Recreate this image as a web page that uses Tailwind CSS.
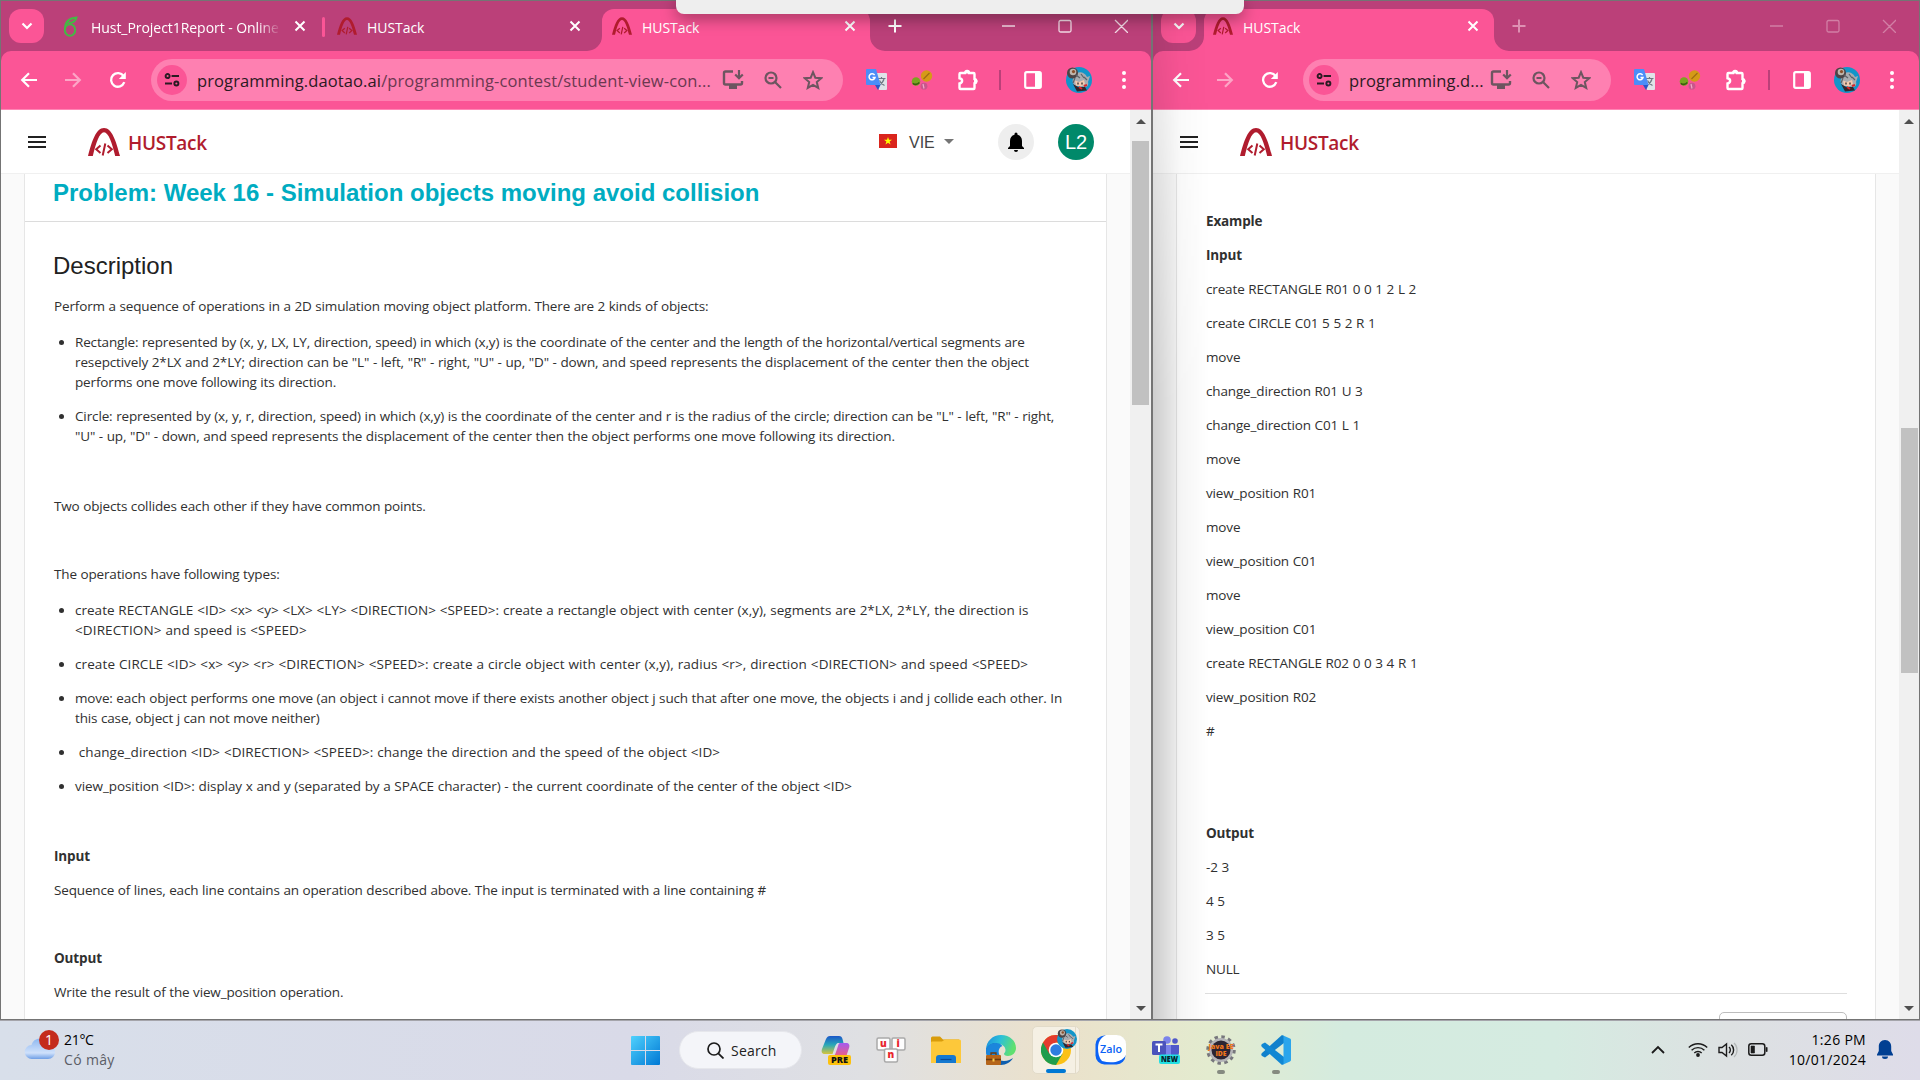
<!DOCTYPE html>
<html lang="en">
<head>
<meta charset="utf-8">
<title>HUSTack</title>
<script src="https://cdn.jsdelivr.net/npm/@tailwindcss/browser@4"></script>
</head>
<body class="w-[1920px] h-[1080px] overflow-hidden relative bg-[#d9deea] font-['Open_Sans','Noto_Sans',sans-serif] text-[#212121]">

<svg class="hidden">
  <symbol id="logo" viewBox="0 0 32 28"><g fill="none" stroke="#b01c2e"><path d="M12.500 17.500l-4.300 3.800 4.300 3.800M19.500 17.500l4.300 3.800-4.300 3.800M17.300 15.500L14.700 27.500" stroke-width="2"/></g><path d="M0 28C4 13 8 0 16 0s12 13 16 28h-4.800C24 15 20.500 4.200 16 4.200S8 15 4.800 28z" fill="#b01c2e"/></symbol>
  <symbol id="x" viewBox="0 0 12 12"><path d="M1.500 1.500l9 9M10.500 1.500l-9 9" stroke="currentColor" stroke-width="2" fill="none"/></symbol>
  <symbol id="chev" viewBox="0 0 12 8"><path d="M1.500 1.500L6 6l4.500-4.500" stroke="currentColor" stroke-width="2.200" fill="none"/></symbol>
  <symbol id="plus" viewBox="0 0 14 14"><path d="M7 0.500v13M0.500 7h13" stroke="currentColor" stroke-width="2" fill="none"/></symbol>
  <symbol id="back" viewBox="0 0 18 16"><path d="M17 8H2.500M9 1.200L2.200 8 9 14.800" stroke="currentColor" stroke-width="2.200" fill="none"/></symbol>
  <symbol id="reload" viewBox="0 0 18 18"><path d="M15.300 11.200A6.800 6.800 0 1 1 14.600 5.200" stroke="currentColor" stroke-width="2.300" fill="none"/><path d="M16.800 1v7h-7z" fill="currentColor"/></symbol>
  <symbol id="tune" viewBox="0 0 18 16"><g stroke="#2b1a22" stroke-width="2.200" fill="none"><circle cx="4" cy="3.500" r="2.300"/><path d="M8.500 3.500H17M1 12h8"/><circle cx="14" cy="12" r="2.300"/></g></symbol>
  <symbol id="install" viewBox="0 0 22 20"><path d="M11 1.500H3.500A1.500 1.500 0 0 0 2 3v10a1.500 1.500 0 0 0 1.500 1.500h15A1.500 1.500 0 0 0 20 13v-2" stroke="#6d5560" stroke-width="2.400" fill="none"/><path d="M7 15h8v4H7z" fill="#6d5560"/><path d="M17 0v7M13.200 4.500L17 8.300l3.800-3.800" stroke="#6d5560" stroke-width="2.200" fill="none"/></symbol>
  <symbol id="zoomout" viewBox="0 0 18 18"><g stroke="#6d5560" stroke-width="2.200" fill="none"><circle cx="7" cy="7" r="5.500"/><path d="M11 11l6 6M4.500 7h5"/></g></symbol>
  <symbol id="star" viewBox="0 0 20 20"><path d="M10 2.200l2.300 5.500 6 .5-4.500 3.900 1.400 5.800L10 14.800l-5.200 3.100 1.400-5.800L1.700 8.200l6-.5z" stroke="#6d5560" stroke-width="2" fill="none"/></symbol>
  <symbol id="gtrans" viewBox="0 0 22 22"><path d="M9 4h11a1 1 0 0 1 1 1v15a1 1 0 0 1-1 1h-7z" fill="#dfe3e8"/><path d="M12 9.500h7.500M15.500 8v1.500M18 10c-.8 3-3 5-5 6M13.500 11.500c1 2.500 3 4 5 5" stroke="#6f7a84" stroke-width="1.200" fill="none"/><path d="M1 0h9l4.500 16H1a1 1 0 0 1-1-1V1a1 1 0 0 1 1-1z" fill="#4b8df8"/><path d="M9 16h5.500L12 21z" fill="#2a56c6"/><path d="M8.600 6.200A3 3 0 1 0 9 8.500H6.500" stroke="#fff" stroke-width="1.500" fill="none"/></symbol>
  <symbol id="balls" viewBox="0 0 22 20"><circle cx="15.500" cy="6" r="5.700" fill="#d59a17"/><path d="M12.500 9L18.500 3" stroke="#a06c12" stroke-width="1.300"/><circle cx="5" cy="11.500" r="4.300" fill="#7aa51f"/><path d="M1.800 13.300c2.500 1.700 5 .9 6.500-.8" stroke="#3a5c10" stroke-width="1.500" fill="none"/><circle cx="13" cy="16.200" r="3.400" fill="#c9568c"/><path d="M12 14l1 4.500" stroke="#f0a8c8" stroke-width="1.200"/></symbol>
  <symbol id="puzzle" viewBox="0 0 22 22"><path d="M3.500 4H8a2 2 0 0 1 4 0h4.500A1 1 0 0 1 17.500 5v5a2.200 2.200 0 0 1 0 4.300v4.700a1 1 0 0 1-1 1h-13a1 1 0 0 1-1-1v-4.500c3.500-.5 3.500-4.800 0-5.300V5a1 1 0 0 1 1-1z" stroke="#fff" stroke-width="2.400" fill="none"/><path d="M8 4a2.200 2.600 0 0 1 4.400 0zM17.500 9.800a2.600 2.300 0 0 1 0 4.600z" fill="#fff" stroke="#fff"/></symbol>
  <symbol id="panel" viewBox="0 0 18 18"><rect x="1.200" y="1.200" width="15.600" height="15.600" rx="1.500" stroke="#fff" stroke-width="2.200" fill="none"/><path d="M11 1h6v16h-6z" fill="#fff"/></symbol>
  <symbol id="avatar" viewBox="0 0 26 26"><circle cx="13" cy="13" r="13" fill="#1295c9"/><path d="M8 9c3-5 10-5 13 1l3-1-2 6c1 3-1 5-3 5l-9-1c-4-2-4-6-2-10z" fill="#a9acb0"/><path d="M9 13.500l4 1.500 5-2 1 4-4 2.500-5-1z" fill="#f3c9ae"/><path d="M7 17l5 3 7 0 2 3.500-10 1z" fill="#33262b"/><circle cx="6.500" cy="6" r="5.500" fill="#4c4446"/><circle cx="7" cy="5" r="3.300" fill="#bdb5ad"/><circle cx="7.500" cy="4.600" r="1.600" fill="#8a4f2a"/><path d="M13 20l3 2M18 19l3-1" stroke="#d8262c" stroke-width="2"/><path d="M10 8l4 3M15 7l3 4M18 10l3 3M9 11l-2 5" stroke="#5d6268" stroke-width="1.200"/><path d="M12 15.500v2M16 15.500v2" stroke="#222" stroke-width="1.200"/></symbol>
  <symbol id="dots" viewBox="0 0 4 20"><g fill="#fff"><circle cx="2" cy="3" r="2"/><circle cx="2" cy="10" r="2"/><circle cx="2" cy="17" r="2"/></g></symbol>
  <symbol id="menu" viewBox="0 0 18 12"><path d="M0 1h18M0 6h18M0 11h18" stroke="#212121" stroke-width="2"/></symbol>
  <symbol id="flareR" viewBox="0 0 15 15"><path d="M0 0v15h15A15 15 0 0 1 0 0z" fill="#fb5596"/></symbol>
  <symbol id="flareL" viewBox="0 0 15 15"><path d="M15 0v15H0A15 15 0 0 0 15 0z" fill="#fb5596"/></symbol>
  <symbol id="up" viewBox="0 0 10 5"><path d="M0 5L5 0l5 5z" fill="#505050"/></symbol>
  <symbol id="down" viewBox="0 0 10 5"><path d="M0 0l5 5 5-5z" fill="#505050"/></symbol>
</svg>

<div class="flex h-[1020px] border-b border-[#747474] bg-white">

  <!-- Left browser window -->
  <section class="w-[1153px] shrink-0 h-full flex flex-col border-t border-l border-r-2 border-[#747474]">
    <div class="h-[50px] bg-[#bb4079] flex text-white text-[14px] shrink-0">
      <div class="ml-2 mt-2 w-[35px] h-[34px] rounded-[12px] bg-[#fb5596] flex items-center justify-center"><svg class="w-3 h-2"><use href="#chev"/></svg></div>
      <div class="ml-[19px] w-[261px] h-[50px] flex items-center">
        <svg class="w-[15px] h-[21px]" viewBox="0 0 15 21"><g fill="none" stroke="#44b944" stroke-width="2"><ellipse cx="7" cy="14" rx="5.200" ry="5.800"/><path d="M2 13C2 6 6 2 13.500 1.500c-1 4-4 5.500-8 5.500"/></g></svg>
        <span class="ml-[13px] mt-[3px] w-[190px] overflow-hidden whitespace-nowrap tracking-[-0.050px] mask-r-from-88%">Hust_Project1Report - Online</span>
        <svg class="ml-[13px] w-3 h-3"><use href="#x"/></svg>
      </div>
      <div class="-ml-0.5 mt-4 w-[3px] h-5 bg-[#fb5596] rounded"></div>
      <div class="ml-3 w-[265px] h-[50px] flex items-center">
        <svg class="w-5 h-[18px]"><use href="#logo"/></svg>
        <span class="ml-[10px] mt-[3px] tracking-[-0.050px]">HUSTack</span>
        <svg class="ml-auto mr-[21px] w-3 h-3"><use href="#x"/></svg>
      </div>
      <svg class="-ml-[15px] mt-[35px] w-[15px] h-[15px]"><use href="#flareL"/></svg>
      <div class="mt-2 w-[268px] h-[42px] rounded-t-[12px] bg-[#fb5596] flex items-center pb-2">
        <svg class="ml-[10px] w-5 h-[18px]"><use href="#logo"/></svg>
        <span class="ml-[10px] mt-[3px] tracking-[-0.050px]">HUSTack</span>
        <svg class="ml-auto mr-[14px] w-3 h-3"><use href="#x"/></svg>
      </div>
      <svg class="mt-[35px] w-[15px] h-[15px]"><use href="#flareR"/></svg>
      <svg class="ml-[3px] mt-[18px] w-[14px] h-[14px]"><use href="#plus"/></svg>
      <svg class="ml-auto mr-[23px] mt-[18px] w-[126px] h-[14px] text-[#f3dbe6]" viewBox="0 0 126 14"><path d="M0 7h13M58.500 1.500h9a1.500 1.500 0 0 1 1.500 1.500v8.500a1.500 1.500 0 0 1-1.500 1.500h-9a1.500 1.500 0 0 1-1.500-1.500V3a1.500 1.500 0 0 1 1.500-1.500zM113 1l13 13M126 1l-13 13" stroke="currentColor" stroke-width="1.300" fill="none"/></svg>
    </div>
    <div class="bg-[#bb4079] shrink-0">
      <div class="h-[59px] border-b border-[#ff86b5] rounded-t-[10px] bg-[#fb5596] flex items-center text-white">
        <svg class="ml-[19px] w-[18px] h-4"><use href="#back"/></svg>
        <svg class="ml-[26px] w-[18px] h-4 -scale-x-100 text-[#fda5c6]"><use href="#back"/></svg>
        <svg class="ml-[27px] w-[18px] h-[18px]"><use href="#reload"/></svg>
        <div class="ml-6 w-[692px] h-[42px] rounded-full bg-[#fe80b1] flex items-center pl-1.5 pr-5">
          <div class="size-[30px] rounded-full bg-[#fb5596] flex items-center justify-center"><svg class="w-4 h-[14px]"><use href="#tune"/></svg></div>
          <span class="ml-[10px] mt-0.5 whitespace-nowrap text-[16.500px] tracking-[0.120px] text-[#6b3850]"><span class="text-[#2b1a22]">programming.daotao.ai</span>/programming-contest/student-view-con...</span>
          <svg class="ml-auto w-[22px] h-5"><use href="#install"/></svg>
          <svg class="ml-5 w-[18px] h-[18px]"><use href="#zoomout"/></svg>
          <svg class="ml-[21px] w-5 h-5"><use href="#star"/></svg>
        </div>
        <svg class="ml-[23px] w-[22px] h-[22px]"><use href="#gtrans"/></svg>
        <svg class="ml-[23px] w-[22px] h-5"><use href="#balls"/></svg>
        <svg class="ml-6 w-[22px] h-[22px]"><use href="#puzzle"/></svg>
        <div class="ml-[20px] w-0.5 h-5 bg-[#bb4079]"></div>
        <svg class="ml-[23px] w-[18px] h-[18px]"><use href="#panel"/></svg>
        <svg class="ml-6 w-[26px] h-[26px]"><use href="#avatar"/></svg>
        <svg class="ml-[30px] w-1 h-5"><use href="#dots"/></svg>
      </div>
    </div>
    <div class="flex flex-1 min-h-0">
      <div class="flex-1 flex flex-col bg-[#fafafa]">
        <header class="h-[64px] shrink-0 bg-white border-b border-[#f0f0f0] flex items-center">
          <svg class="ml-[27px] w-[18px] h-3"><use href="#menu"/></svg>
          <svg class="ml-[42px] w-8 h-7"><use href="#logo"/></svg>
          <span class="ml-2 mt-[3px] text-[19px] font-semibold text-[#b01c2e] tracking-[-0.300px]">HUSTack</span>
          <div class="ml-auto w-[18px] h-[14px] bg-[#da251d] flex items-center justify-center -mt-0.5"><svg class="w-2 h-2" viewBox="0 0 20 20"><path d="M10 0l2.500 7H20l-6 4.500 2.300 7.500L10 14.500 3.700 19 6 11.500 0 7h7.500z" fill="#ff0"/></svg></div>
          <span class="ml-3 mt-0.5 font-['Liberation_Sans',Arial,sans-serif] text-[16px] text-[#444] w-[27px]">VIE</span>
          <svg class="ml-[8px] w-[10px] h-[5px]"><path d="M0 0l5 5 5-5z" fill="#757575"/></svg>
          <div class="ml-11 size-9 rounded-full bg-[#eee] flex items-center justify-center"><svg class="w-4 h-5" viewBox="0 0 16 20"><path d="M8 20a2 2 0 0 0 2-2H6a2 2 0 0 0 2 2zM14 14V9c0-3.100-1.600-5.600-4.500-6.300V2a1.500 1.500 0 0 0-3 0v.7C3.600 3.400 2 5.900 2 9v5l-2 2v1h16v-1z"/></svg></div>
          <div class="ml-6 mr-[36px] size-9 rounded-full bg-[#00896a] text-white text-[20px] font-['Liberation_Sans',Arial,sans-serif] flex items-center justify-center">L2</div>
        </header>
        <article class="ml-[23px] mr-[23px] flex-1 min-h-0 overflow-hidden bg-white border-x border-[#e6e6e6]">
          <h1 class="h-[48px] pl-7 border-b border-[#dcdcdc] font-['Liberation_Sans',Arial,sans-serif] font-bold text-[24px] leading-[38px] text-[#00acc1] whitespace-nowrap">Problem: Week 16 - Simulation objects moving avoid collision</h1>
          <div class="pl-[29px] flex flex-col text-[13.500px] leading-5 whitespace-nowrap text-[#303030]">
            <h2 class="-ml-px mt-7 font-['Liberation_Sans',Arial,sans-serif] text-[24px] leading-8 text-[#212121]">Description</h2>
            <div class="mt-3.5 flex flex-col gap-[14px] tracking-[-0.150px] [word-spacing:0.260px]">
              <p>Perform a sequence of operations in a 2D simulation moving object platform. There are 2 kinds of objects:</p>
              <ul class="my-0.5 pl-[21px] flex flex-col gap-[14px] list-disc">
                <li>Rectangle: represented by (x, y, LX, LY, direction, speed) in which (x,y) is the coordinate of the center and the length of the horizontal/vertical segments are<br><span class="tracking-[-0.120px]">resepctively 2*LX and 2*LY; direction can be "L" - left, "R" - right, "U" - up, "D" - down, and speed represents the displacement of the center then the object</span><br>performs one move following its direction.</li>
                <li class="tracking-[-0.130px]">Circle: represented by (x, y, r, direction, speed) in which (x,y) is the coordinate of the center and r is the radius of the circle; direction can be "L" - left, "R" - right,<br>"U" - up, "D" - down, and speed represents the displacement of the center then the object performs one move following its direction.</li>
              </ul>
              <p>&nbsp;</p>
              <p>Two objects collides each other if they have common points.</p>
              <p>&nbsp;</p>
              <p>The operations have following types:</p>
              <ul class="my-0.5 pl-[21px] flex flex-col gap-[14px] list-disc">
                <li class="tracking-[0.020px]">create RECTANGLE &lt;ID&gt; &lt;x&gt; &lt;y&gt; &lt;LX&gt; &lt;LY&gt; &lt;DIRECTION&gt; &lt;SPEED&gt;: create a rectangle object with center (x,y), segments are 2*LX, 2*LY, the direction is<br><span class="tracking-[0.120px]">&lt;DIRECTION&gt; and speed is &lt;SPEED&gt;</span></li>
                <li class="tracking-[0.100px]">create CIRCLE &lt;ID&gt; &lt;x&gt; &lt;y&gt; &lt;r&gt; &lt;DIRECTION&gt; &lt;SPEED&gt;: create a circle object with center (x,y), radius &lt;r&gt;, direction &lt;DIRECTION&gt; and speed &lt;SPEED&gt;</li>
                <li>move: each object performs one move (an object i cannot move if there exists another object j such that after one move, the objects i and j collide each other. In<br>this case, object j can not move neither)</li>
                <li class="tracking-[0.060px]">&nbsp;change_direction &lt;ID&gt; &lt;DIRECTION&gt; &lt;SPEED&gt;: change the direction and the speed of the object &lt;ID&gt;</li>
                <li class="tracking-[-0.075px]">view_position &lt;ID&gt;: display x and y (separated by a SPACE character) - the current coordinate of the center of the object &lt;ID&gt;</li>
              </ul>
              <p>&nbsp;</p>
              <p class="font-bold">Input</p>
              <p>Sequence of lines, each line contains an operation described above. The input is terminated with a line containing #</p>
              <p>&nbsp;</p>
              <p class="font-bold">Output</p>
              <p>Write the result of the view_position operation.</p>
            </div>
          </div>
        </article>
      </div>
      <div class="w-[21px] bg-[#f0f0f0] flex flex-col items-center">
        <svg class="mt-[9px] w-[10px] h-[5px]"><use href="#up"/></svg>
        <div class="mt-[17px] w-[17px] h-[264px] bg-[#c1c1c1]"></div>
        <svg class="mt-auto mb-2 w-[10px] h-[5px]"><use href="#down"/></svg>
      </div>
    </div>
  </section>

  <!-- Right browser window -->
  <section class="relative flex-1 h-full flex flex-col border-t border-r border-[#747474]">
    <div class="h-[50px] bg-[#bb4079] flex text-white text-[14px] shrink-0">
      <div class="ml-2 mt-2 w-[35px] h-[34px] rounded-[12px] bg-[#fb5596] flex items-center justify-center"><svg class="w-3 h-2"><use href="#chev"/></svg></div>
      <svg class="-ml-[7px] mt-[35px] w-[15px] h-[15px]"><use href="#flareL"/></svg>
      <div class="mt-2 w-[290px] h-[42px] rounded-t-[12px] bg-[#fb5596] flex items-center pb-2">
        <svg class="ml-[9px] w-5 h-[18px]"><use href="#logo"/></svg>
        <span class="ml-[10px] mt-[3px] tracking-[-0.050px]">HUSTack</span>
        <svg class="ml-auto mr-[15px] w-3 h-3"><use href="#x"/></svg>
      </div>
      <svg class="mt-[35px] w-[15px] h-[15px]"><use href="#flareR"/></svg>
      <svg class="ml-[3px] mt-[18px] w-[14px] h-[14px] text-[#de91b3]"><use href="#plus"/></svg>
      <svg class="ml-auto mr-[23px] mt-[18px] w-[126px] h-[14px] text-[#d27fa5]" viewBox="0 0 126 14"><path d="M0 7h13M58.500 1.500h9a1.500 1.500 0 0 1 1.500 1.500v8.500a1.500 1.500 0 0 1-1.500 1.500h-9a1.500 1.500 0 0 1-1.500-1.500V3a1.500 1.500 0 0 1 1.500-1.500zM113 1l13 13M126 1l-13 13" stroke="currentColor" stroke-width="1.300" fill="none"/></svg>
    </div>
    <div class="bg-[#bb4079] shrink-0">
      <div class="h-[59px] border-b border-[#ff86b5] rounded-t-[10px] bg-[#fb5596] flex items-center text-white">
        <svg class="ml-[19px] w-[18px] h-4"><use href="#back"/></svg>
        <svg class="ml-[26px] w-[18px] h-4 -scale-x-100 text-[#fda5c6]"><use href="#back"/></svg>
        <svg class="ml-[27px] w-[18px] h-[18px]"><use href="#reload"/></svg>
        <div class="ml-6 w-[308px] h-[42px] rounded-full bg-[#fe80b1] flex items-center pl-1.5 pr-5">
          <div class="size-[30px] rounded-full bg-[#fb5596] flex items-center justify-center"><svg class="w-4 h-[14px]"><use href="#tune"/></svg></div>
          <span class="ml-[10px] mt-0.5 whitespace-nowrap text-[16.500px] tracking-[0.110px] text-[#2b1a22]">programming.d...</span>
          <svg class="ml-auto w-[22px] h-5"><use href="#install"/></svg>
          <svg class="ml-5 w-[18px] h-[18px]"><use href="#zoomout"/></svg>
          <svg class="ml-[21px] w-5 h-5"><use href="#star"/></svg>
        </div>
        <svg class="ml-[23px] w-[22px] h-[22px]"><use href="#gtrans"/></svg>
        <svg class="ml-[23px] w-[22px] h-5"><use href="#balls"/></svg>
        <svg class="ml-6 w-[22px] h-[22px]"><use href="#puzzle"/></svg>
        <div class="ml-[21px] w-0.5 h-5 bg-[#bb4079]"></div>
        <svg class="ml-[23px] w-[18px] h-[18px]"><use href="#panel"/></svg>
        <svg class="ml-[23px] w-[26px] h-[26px]"><use href="#avatar"/></svg>
        <svg class="ml-[30px] w-1 h-5"><use href="#dots"/></svg>
      </div>
    </div>
    <div class="flex flex-1 min-h-0">
      <div class="flex-1 flex flex-col bg-[#fafafa]">
        <header class="h-[64px] shrink-0 bg-white border-b border-[#f0f0f0] flex items-center">
          <svg class="ml-[27px] w-[18px] h-3"><use href="#menu"/></svg>
          <svg class="ml-[42px] w-8 h-7"><use href="#logo"/></svg>
          <span class="ml-2 mt-[3px] text-[19px] font-semibold text-[#b01c2e] tracking-[-0.300px]">HUSTack</span>
        </header>
        <article class="ml-[23px] mr-[23px] flex-1 min-h-0 overflow-hidden bg-white border-x border-[#e6e6e6] pl-7 pr-7 pt-[37px]">
          <div class="pl-px flex flex-col gap-[14px] text-[13.500px] leading-5 whitespace-nowrap tracking-[-0.150px] [word-spacing:0.400px] text-[#303030]">
            <p class="font-bold">Example</p>
            <p class="font-bold">Input</p>
            <p>create RECTANGLE R01 0 0 1 2 L 2</p>
            <p>create CIRCLE C01 5 5 2 R 1</p>
            <p>move</p>
            <p>change_direction R01 U 3</p>
            <p>change_direction C01 L 1</p>
            <p>move</p>
            <p>view_position R01</p>
            <p>move</p>
            <p>view_position C01</p>
            <p>move</p>
            <p>view_position C01</p>
            <p>create RECTANGLE R02 0 0 3 4 R 1</p>
            <p>view_position R02</p>
            <p>#</p>
            <p>&nbsp;</p>
            <p>&nbsp;</p>
            <p class="font-bold">Output</p>
            <p>-2 3</p>
            <p>4 5</p>
            <p>3 5</p>
            <p>NULL</p>
          </div>
          <div class="mt-[14px] h-px bg-[#dedede]"></div>
          <div class="mt-[18px] ml-auto w-[128px] h-9 rounded-[5px] border border-[#bdbdbd]"></div>
        </article>
      </div>
      <div class="w-5 bg-[#f0f0f0] flex flex-col items-center">
        <svg class="mt-[9px] w-[10px] h-[5px]"><use href="#up"/></svg>
        <div class="mt-[304px] w-[17px] h-[245px] bg-[#c1c1c1]"></div>
        <svg class="mt-auto mb-2 w-[10px] h-[5px]"><use href="#down"/></svg>
      </div>
    </div>
    <!-- shade cast by the focused window -->
    <div class="absolute left-0 top-0 w-[56px] h-full bg-gradient-to-r from-black/18 via-black/4 to-transparent mask-t-from-60% mask-t-to-120%"></div>
  </section>
</div>

<!-- Edge of a panel sliding in from the top of the screen -->
<div class="absolute left-[676px] top-0 w-[568px] h-[14px] rounded-b-[8px] bg-[#eeeeee] shadow-[0_4px_16px_rgba(0,0,0,0.4)]"></div>

<!-- Taskbar -->
<footer class="h-[60px] pb-[2px] border-t border-[#a5a5ab] flex items-center bg-[linear-gradient(90deg,#d8dfea_0%,#d9dae8_33%,#dfe0e3_45%,#ebe1cb_55%,#e3ebcf_63%,#d4ebdf_70%,#d5ebe1_81%,#dde1e2_90%,#dedce9_100%)]">
  <svg class="ml-6 w-[36px] h-[36px] -mt-1" viewBox="0 0 36 36"><defs><linearGradient id="cl" x1="0" y1="0" x2="0" y2="1"><stop offset="0" stop-color="#8fb8f0"/><stop offset=".7" stop-color="#cfe1fb"/><stop offset="1" stop-color="#6f9fe6"/></linearGradient></defs><path d="M8 29a7 7 0 0 1-.5-14C9 10 13 8 17 9c4 0 6 3 7 6 4 0 7 3 7 7s-3 7-7 7z" fill="url(#cl)"/><circle cx="25" cy="10" r="10" fill="#c42b1c"/><text x="21" y="15" font-size="14" fill="#fff">1</text></svg>
  <div class="ml-1 text-[14px] leading-[20px] text-black"><div class="tracking-[-0.300px]">21°C</div><div class="text-[#5b5d66] tracking-[0.350px]">Có mây</div></div>

  <div class="ml-auto mr-[348px] flex items-center">
    <svg class="w-[29px] h-[29px] mt-px" viewBox="0 0 29 29"><defs><linearGradient id="wn" x1="0" y1="0" x2="1" y2="1"><stop offset="0" stop-color="#4fd1fd"/><stop offset="1" stop-color="#0078d4"/></linearGradient></defs><path d="M1 0h13v14H0V1a1 1 0 0 1 1-1zM15 0h13a1 1 0 0 1 1 1v13H15zM0 15h14v14H1a1 1 0 0 1-1-1zM15 15h14v13a1 1 0 0 1-1 1H15z" fill="url(#wn)"/></svg>
    <div class="ml-[19px] mt-px w-[123px] h-[38px] rounded-full bg-[#f4f5f9] border border-[#e6e7ec] flex items-center">
      <svg class="ml-[27px] w-[17px] h-[17px]" viewBox="0 0 17 17"><circle cx="7" cy="7" r="6" stroke="#1b1b1b" stroke-width="1.700" fill="none"/><path d="M11.300 11.300L16.500 16.500" stroke="#1b1b1b" stroke-width="1.800"/></svg>
      <span class="ml-[7px] mt-px text-[14px] tracking-[0.200px]">Search</span>
    </div>
    <div class="ml-[6px] mt-px grid grid-cols-9 w-[495px] h-12 items-center justify-items-center">
      <svg class="w-[30px] h-[30px]" viewBox="0 0 30 30"><defs><linearGradient id="c1" x1="0" y1="0" x2="0" y2="1"><stop offset="0" stop-color="#1a56c8"/><stop offset=".5" stop-color="#2aa9b8"/><stop offset="1" stop-color="#d7c53a"/></linearGradient><linearGradient id="c2" x1="0" y1="0" x2="0" y2="1"><stop offset="0" stop-color="#a45cf0"/><stop offset="1" stop-color="#f2607a"/></linearGradient></defs><path d="M9 1h9c2 0 3 1 3.500 3l1 4h-5c-2 0-3 2-4 5l-2 6H4c-3 0-4-2-3-5L5 4c1-2 2-3 4-3z" fill="url(#c1)"/><path d="M19 8h6c3 0 4 2 3 5l-3 9H10c3 0 4-2 5-5l2-6c.5-2 1-3 2-3z" fill="url(#c2)"/><rect x="7" y="20" width="23" height="10" rx="2" fill="#fdc10c"/><text x="10" y="28" font-size="8" font-weight="800" fill="#111" textLength="17" lengthAdjust="spacingAndGlyphs">PRE</text></svg>
      <svg class="w-[30px] h-[26px]" viewBox="0 0 30 26"><g fill="#fdfdfd" stroke="#a9a9a9" stroke-width="1.500"><rect x="1" y="1" width="13" height="12" rx="1.500"/><rect x="16" y="1" width="13" height="12" rx="1.500"/><rect x="8.500" y="12" width="13" height="13" rx="1.500"/></g><g font-size="10" font-weight="800" fill="#e8242c"><text x="4" y="9.500">u</text><text x="20.500" y="9.500">i</text><text x="11.500" y="21">n</text></g></svg>
      <svg class="w-[30px] h-[28px]" viewBox="0 0 30 28"><path d="M0 2a1.500 1.500 0 0 1 1.500-1.500H9L12 3.500H28V9H0z" fill="#d99c0b"/><path d="M1 5.500h10l3-2h14.500A1.500 1.500 0 0 1 30 5v22H0V6.500a1 1 0 0 1 1-1z" fill="#fdc83a"/><path d="M5 27v-5a3 3 0 0 1 3-3h14a3 3 0 0 1 3 3v5z" fill="#1478d0"/><path d="M9.500 23.500h11" stroke="#0a4a96" stroke-width="1.200"/></svg>
      <svg class="w-[30px] h-[30px]" viewBox="0 0 30 30"><defs><linearGradient id="e1" x1="0" y1="0" x2="1" y2="0.300"><stop offset="0" stop-color="#1a8ae0"/><stop offset=".5" stop-color="#2cc0d8"/><stop offset="1" stop-color="#5fe070"/></linearGradient></defs><path d="M0 15C0 6 7 0 15 0c9 0 15 6 15 13 0 5-4 8-8 8-3 0-4-1-4-2.500 1-1 1.500-2 1.500-3.500 0-3-3-6-7-6-7 0-12 4-12.500 6z" fill="url(#e1)"/><path d="M0 15c1-4 5-7 11-7-2 2-3 5-3 8 0 6 4 10 10 10 4 0 7-1.500 9-3-2 4-7 7-12 7C6 30 0 23 0 15z" fill="#0f5fae"/><path d="M0 14c2-4 6-6 10-6 3 0 5 1 6.500 3-3 1-4.500 4-3.500 8l1 2H1C0 19 0 16 0 14z" fill="#1b86dc"/><rect x="0" y="20" width="15" height="10" rx="1" fill="#b5651a"/><path d="M5 20v-2h5v2M0 24.500h15" stroke="#6d3a0c" stroke-width="1.300" fill="none"/><rect x="6.500" y="23.500" width="2" height="3" fill="#fbc94a"/></svg>
      <div class="relative w-12 h-12 rounded-[5px] bg-[#f5f0e4] border border-[#e2dbc9] flex items-center justify-center">
        <svg class="w-[30px] h-[30px] -mt-[1px]" viewBox="0 0 30 30"><circle cx="15" cy="15" r="15" fill="#fbc116"/><path d="M15 15L2 7.500A15 15 0 0 0 15 30l6.500-11.200z" fill="#1f9d4d"/><path d="M2 7.500A15 15 0 0 1 28 7.500H15L8.500 19z" fill="#e33b2e"/><circle cx="15" cy="15" r="7.300" fill="#fff"/><circle cx="15" cy="15" r="5.700" fill="#2f7de0"/></svg>
        <div class="absolute right-[3px] top-0 w-px h-full bg-[#e2dbc9]"></div>
        <svg class="absolute left-[24px] top-[2px] w-5 h-5"><use href="#avatar"/></svg>
        <div class="absolute left-[13px] bottom-0 w-5 h-1 rounded-full bg-[#0078d4]"></div>
      </div>
      <svg class="w-[31px] h-[30px]" viewBox="0 0 31 30"><rect x=".5" y=".5" width="30" height="29" rx="9" fill="#0a62f5"/><path d="M11 0h11a9 9 0 0 1 9 9v11c-4 7-14 9-24 6-3-3-4-8-4-13C3 8 5 3 11 0z" fill="#fff"/><text x="5" y="18" font-size="10.500" font-weight="600" fill="#0a62f5" textLength="22" lengthAdjust="spacingAndGlyphs">Zalo</text></svg>
      <svg class="w-[30px] h-[28px]" viewBox="0 0 30 28"><circle cx="16" cy="4" r="3.800" fill="#7b83eb"/><circle cx="24" cy="5" r="2.800" fill="#5059c9"/><path d="M9 9h11v9a6 6 0 0 1-11 2z" fill="#7b83eb"/><path d="M20 9h8v8a5 5 0 0 1-8 3z" fill="#5059c9"/><rect x="1" y="5" width="14" height="14" rx="1.500" fill="#4b53bc"/><path d="M4.500 8.500h7M8 8.500V16" stroke="#fff" stroke-width="2"/><rect x="8" y="18.500" width="21" height="9.500" rx="2" fill="#22dfe3"/><text x="10" y="26.300" font-size="8.200" font-weight="800" fill="#06222b" textLength="17" lengthAdjust="spacingAndGlyphs">NEW</text></svg>
      <div class="relative w-[30px] h-[30px]"><svg class="w-[30px] h-[30px]" viewBox="0 0 30 30"><circle cx="15" cy="15" r="13" fill="none" stroke="#77777d" stroke-width="3.500" stroke-dasharray="3.400 3.400"/><circle cx="15" cy="15" r="12" fill="#b4b4b8"/><circle cx="15" cy="15" r="9.500" fill="#2b2433"/><text x="2.500" y="14" font-size="7.500" font-weight="800" fill="#f0761b" textLength="25" lengthAdjust="spacingAndGlyphs">Java EE</text><text x="9.500" y="21" font-size="7" font-weight="800" fill="#f0761b" textLength="11" lengthAdjust="spacingAndGlyphs">IDE</text></svg><div class="absolute left-[11px] top-[35px] w-2 h-1 rounded-full bg-[#858a80]"></div></div>
      <div class="relative w-[30px] h-[30px]"><svg class="w-[30px] h-[30px]" viewBox="0 0 30 30"><path d="M21 0l2 1v7L4 22.500 1 21c-1-1-1-2 0-3z" fill="#1080cc"/><path d="M23 29l-2 1L1 12c-1-1-1-2 0-3l3-1.500L23 22z" fill="#1187d3"/><path d="M21 0l8 3.500c.7.300 1 1 1 1.500v20c0 .6-.3 1.200-1 1.500L21 30c1-.5 1.500-1 1.500-2V2c0-1-.5-1.500-1.500-2z" fill="#2ba5ec"/></svg><div class="absolute left-[11px] top-[35px] w-2 h-1 rounded-full bg-[#858a80]"></div></div>
    </div>
  </div>

  <div class="mr-[27px] flex items-center text-[#1b1b1b]">
    <svg class="w-[14px] h-[9px]" viewBox="0 0 14 9"><path d="M1 8l6-6 6 6" stroke="currentColor" stroke-width="1.800" fill="none"/></svg>
    <svg class="ml-[23px] w-5 h-[15px]" viewBox="0 0 20 15"><g fill="none" stroke="currentColor" stroke-width="1.400"><path d="M.8 5.500a13 13 0 0 1 18.400 0M3.600 8.300a9 9 0 0 1 12.800 0M6.300 11a5.200 5.200 0 0 1 7.400 0"/></g><circle cx="10" cy="13" r="1.900" fill="currentColor"/></svg>
    <svg class="ml-[10px] w-5 h-4" viewBox="0 0 20 16"><path d="M1 5.500h3L8.500 2v12L4 10.500H1zM11 5a4 4 0 0 1 0 6M13.300 2.800a7 7 0 0 1 0 10.400" stroke="currentColor" stroke-width="1.400" fill="none"/><path d="M16 1a9.500 9.500 0 0 1 0 14" stroke="#b4b8b8" stroke-width="1.200" fill="none"/></svg>
    <svg class="ml-[10px] w-5 h-[13px]" viewBox="0 0 20 13"><rect x=".8" y=".8" width="16" height="11.400" rx="2.500" stroke="currentColor" stroke-width="1.500" fill="none"/><path d="M3 3h3.500v7H3zM18 4.500h1.200v4H18z" fill="currentColor" stroke="currentColor" stroke-width=".6"/></svg>
    <div class="w-[98px] text-right text-[14px] leading-[20px] tracking-[0.300px] text-black"><div>1:26 PM</div><div>10/01/2024</div></div>
    <svg class="ml-[11px] w-4 h-[19px]" viewBox="0 0 16 19"><path d="M8 0c4 0 6.200 3 6.200 6.500V11l1.800 3.500v1H0v-1L1.800 11V6.500C1.800 3 4 0 8 0zM5 16.500h6a3 2.500 0 0 1-6 0z" fill="#003f92"/></svg>
  </div>
</footer>
</body>
</html>
